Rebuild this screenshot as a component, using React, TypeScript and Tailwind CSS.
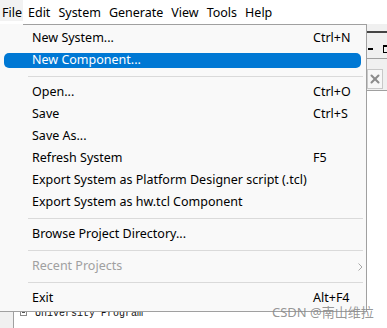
import { X } from 'lucide-react'

type Item =
  | { kind: 'item'; label: string; shortcut?: string; active?: boolean; disabled?: boolean; submenu?: boolean }
  | { kind: 'sep' }

const menuItems: Item[] = [
  { kind: 'item', label: 'New System...', shortcut: 'Ctrl+N' },
  { kind: 'item', label: 'New Component...', active: true },
  { kind: 'sep' },
  { kind: 'item', label: 'Open...', shortcut: 'Ctrl+O' },
  { kind: 'item', label: 'Save', shortcut: 'Ctrl+S' },
  { kind: 'item', label: 'Save As...' },
  { kind: 'item', label: 'Refresh System', shortcut: 'F5' },
  { kind: 'item', label: 'Export System as Platform Designer script (.tcl)' },
  { kind: 'item', label: 'Export System as hw.tcl Component' },
  { kind: 'sep' },
  { kind: 'item', label: 'Browse Project Directory...' },
  { kind: 'sep' },
  { kind: 'item', label: 'Recent Projects', disabled: true, submenu: true },
  { kind: 'sep' },
  { kind: 'item', label: 'Exit', shortcut: 'Alt+F4' },
]

const menuBar = ['Edit', 'System', 'Generate', 'View', 'Tools', 'Help']

function FileMenu() {
  return (
    <div className="absolute left-0 top-[24px] w-[367px] bg-[#f9f9f9] border-r border-b border-[#a0a0a0] pt-[3px] pb-[2px] text-[12.5px]">
      {/* top border, open under the File heading */}
      <div className="absolute left-[23px] right-0 top-0 h-px bg-[#a0a0a0]" />
      {menuItems.map((it, i) => {
        if (it.kind === 'sep') {
          return (
            <div key={i} className="h-[10px] pl-[28px] pr-[3px] pt-[5px]">
              <div className="h-px bg-[#dadada]" />
            </div>
          )
        }
        return (
          <div key={i} className="h-[22px] pl-[4px] pr-[5px] pt-[4px]">
            <div
              className={
                'relative flex h-[15px] items-center rounded-[5px] pl-[28px] ' +
                (it.active ? 'bg-[#0078d4] text-white' : it.disabled ? 'text-[#a0a0a0]' : 'text-black')
              }
            >
              <span className="w-[281px] whitespace-nowrap">{it.label}</span>
              {it.shortcut && <span className="whitespace-nowrap">{it.shortcut}</span>}
              {it.submenu && (
                <svg className="absolute right-[-2px] top-[4px]" width="5" height="8" viewBox="0 0 5 8">
                  <path d="M0.5 0.5 L4 4 L0.5 7.5" fill="none" stroke="#a8a8a8" strokeWidth="1" />
                </svg>
              )}
            </div>
          </div>
        )
      })}
    </div>
  )
}

export default function App() {
  return (
    <div className="relative w-[387px] h-[328px] overflow-hidden bg-white font-['Noto_Sans',sans-serif] text-black">
      {/* menu bar */}
      <div className="flex h-[24px] items-start text-[12.5px]">
        <div className="h-[21px] w-[23px] bg-[#f2f2f2] pl-[2px] pt-[4px]">File</div>
        <div className="flex gap-[8px] pl-[5px] pt-[4px]">
          {menuBar.map((m) => (
            <span key={m}>{m}</span>
          ))}
        </div>
      </div>

      {/* workspace behind the menu */}
      <div className="flex h-[304px]">
        <div className="flex flex-1 flex-col justify-end">
          <div className="flex h-[22px]">
            <div className="w-[14px] bg-[#f0f0f0] border-r border-[#a0a0a0]" />
            <div className="flex items-start gap-[8px] pl-[6px] pt-[2px]">
              <div className="relative mt-[1px] h-[7px] w-[7px] border border-[#8a8a8a]">
                <div className="absolute left-[1px] top-[2px] h-px w-[3px] bg-[#555]" />
              </div>
              <span className="font-['Liberation_Mono',monospace] text-[10px] leading-[12px] text-[#111]">University Program</span>
            </div>
          </div>
        </div>
        <div className="flex w-[20px] flex-col bg-[#f0f0f0]">
          <div className="h-[7px]" />
          <div className="h-[27px] border-t-2 border-[#444] relative">
            <div className="absolute left-[1px] top-[15px] h-[2px] w-[5px] bg-black" />
            <div className="absolute left-[16px] top-[12px] h-[8px] w-[8px] border border-black border-t-2" />
          </div>
          <div className="h-[32px] border-t border-[#a0a0a0] pt-[10px]">
            <div className="flex h-[20px] w-[16px] items-center justify-center border border-[#c8c8c8] bg-[#f7f7f7]">
              <X size={14} strokeWidth={3.5} color="#8c8c8c" />
            </div>
          </div>
          <div className="flex-1 bg-white border-t border-[#a0a0a0]" />
        </div>
      </div>

      <FileMenu />

      <div className="absolute left-[272px] top-[305px] font-['Noto_Sans','Noto_Sans_CJK_SC',sans-serif] text-[13px] leading-[14px] text-[#8a8a8a]/90 whitespace-nowrap">
        CSDN @南山维拉
      </div>
    </div>
  )
}
